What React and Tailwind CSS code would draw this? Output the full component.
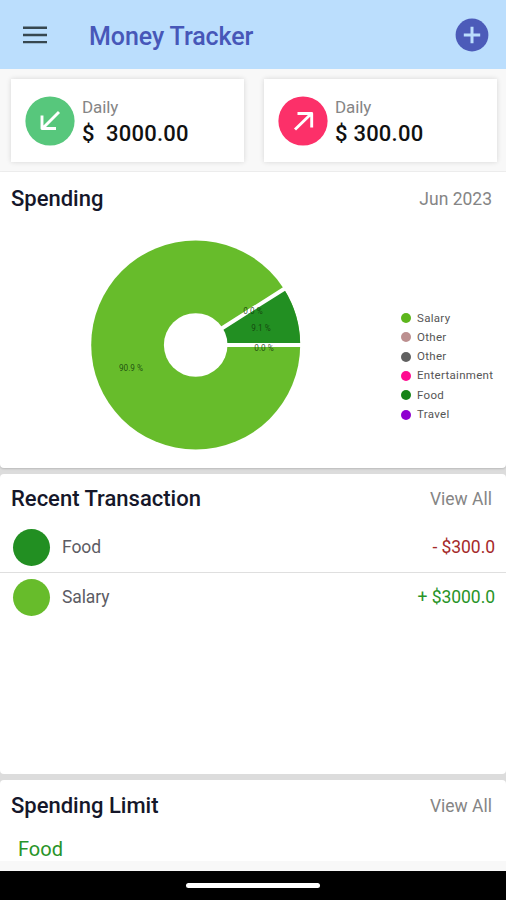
const legend = [
  { name: 'Salary', dot: 'bg-[#5db61c]' },
  { name: 'Other', dot: 'bg-[#bc8f8f]' },
  { name: 'Other', dot: 'bg-[#606060]' },
  { name: 'Entertainment', dot: 'bg-[#ff0a90]' },
  { name: 'Food', dot: 'bg-[#178417]' },
  { name: 'Travel', dot: 'bg-[#8f00d0]' },
];

function Header() {
  return (
    <header className="flex h-[69px] shrink-0 items-center bg-[#bbdefd] pr-[17px] pl-[23px]">
      <svg width="24" height="18" viewBox="0 0 24 18" stroke="#37474f" strokeWidth="2.4">
        <path d="M0 1.7h24M0 9h24M0 16.1h24" />
      </svg>
      <h1 className="ml-[42px] pt-[4px] text-[25px] leading-8 font-medium tracking-[-0.08px] text-[#4757b8]">Money Tracker</h1>
      <svg className="ml-auto" width="34" height="34" viewBox="0 0 34 34">
        <circle cx="17" cy="17" r="16.4" fill="#4c5bb9" />
        <path d="M17 8.8v16.4M8.8 17h16.4" stroke="#bbdefd" strokeWidth="3" />
      </svg>
    </header>
  );
}

function SummaryCard({ color, arrow, amount }) {
  return (
    <div className="flex h-[83px] w-[233px] items-center bg-white pl-[14px] shadow-[0_0_5px_rgba(0,0,0,0.14)]">
      <svg width="50" height="50" viewBox="0 0 50 50" className="shrink-0">
        <circle cx="25" cy="25" r="24.6" fill={color} />
        <path d={arrow} fill="none" stroke="white" strokeWidth="2.9" strokeLinejoin="round" />
      </svg>
      <div className="ml-[7px] pt-[2px]">
        <div className="text-[17px] leading-[24px] tracking-[-0.1px] text-[#858585]">Daily</div>
        <div className="text-[22px] leading-[29px] font-medium tracking-[0.22px] whitespace-pre text-[#111]">{amount}</div>
      </div>
    </div>
  );
}

function SectionTitle({ title, action }) {
  return (
    <div className="flex h-[50px] items-center justify-between pr-[14px] pl-[11px]">
      <h2 className="text-[22px] leading-[28px] font-medium tracking-[0px] text-[#15172a]">{title}</h2>
      <span className="text-[17.5px] tracking-[0px] text-[#858585]">{action}</span>
    </div>
  );
}

function Donut() {
  return (
    <svg width="210" height="210" viewBox="0 0 210 210" className="shrink-0 font-[Roboto,sans-serif]">
      <circle cx="104.7" cy="105" r="104.5" fill="#67bc2b" />
      <path d="M104.7 105L192.9 49A104.5 104.5 0 0 1 209.2 105Z" fill="#228f22" />
      <path d="M194.2 48.2L104.7 105H210" fill="none" stroke="white" strokeWidth="4" />
      <circle cx="104.7" cy="105" r="31.8" fill="white" />
      <g fontSize="8.2" fill="#123c0c" fillOpacity="0.85" textAnchor="middle">
        <text x="162" y="73.5">0.0 %</text>
        <text x="170" y="91">9.1 %</text>
        <text x="173" y="110.5">0.0 %</text>
        <text x="40" y="131">90.9 %</text>
      </g>
    </svg>
  );
}

function Transaction({ dot, name, amount, color }) {
  return (
    <div className="flex h-[50px] items-center pr-[11px] pl-[13px]">
      <span className={`size-[37px] rounded-full ${dot}`} />
      <span className="ml-[12px] pt-[1px] text-[17.5px] tracking-[-0.1px] text-[#5c5c64]">{name}</span>
      <span className={`ml-auto text-[17.5px] tracking-[-0.05px] ${color}`}>{amount}</span>
    </div>
  );
}

export default function App() {
  return (
    <div className="flex h-[900px] w-[506px] flex-col overflow-hidden bg-[#dcdcdc] font-[Roboto,sans-serif]">
      <Header />
      <div className="flex h-[103px] shrink-0 gap-[20px] border-b border-[#eeeeee] bg-[#f8f8f8] pt-[10px] pl-[11px]">
        <SummaryCard color="#57c77c" arrow="M34 16L17.5 32.5M17 19.5V32.5H31" amount="$  3000.00" />
        <SummaryCard color="#fc3069" arrow="M17 33.5L33.5 17.5M19.5 17.5H33.7V31.5" amount="$ 300.00" />
      </div>

      <section className="flex h-[296px] shrink-0 flex-col rounded-b-[4px] bg-white pt-[2px] shadow-[0_1px_2px_rgba(0,0,0,0.15)]">
        <SectionTitle title="Spending" action="Jun 2023" />
        <div className="flex pt-[15.5px] pl-[91px]">
          <Donut />
          <ul className="mt-[69px] ml-[100px]">
            {legend.map((item, i) => (
              <li key={i} className="flex h-[19.3px] items-center gap-[6px] text-[11.5px] tracking-[0.3px] text-[#555]">
                <span className={`size-[10px] rounded-full ${item.dot}`} />
                {item.name}
              </li>
            ))}
          </ul>
        </div>
      </section>

      <section className="mt-[6px] h-[300px] shrink-0 rounded-[4px] bg-white">
        <SectionTitle title="Recent Transaction" action="View All" />
        <div className="-mt-[2px] border-b border-[#dfdfdf]">
          <Transaction dot="bg-[#228f22]" name="Food" amount="- $300.0" color="text-[#a52a2a]" />
        </div>
        <div className="-mt-[1px]">
          <Transaction dot="bg-[#67bc2b]" name="Salary" amount="+ $3000.0" color="text-[#289428]" />
        </div>
      </section>

      <section className="mt-[6px] h-[91px] shrink-0 rounded-t-[4px] border-b-[10px] border-[#f8f8f8] bg-white pt-[1px]">
        <SectionTitle title="Spending Limit" action="View All" />
        <div className="pl-[18px] text-[20px] leading-[37px] tracking-[0px] text-[#289428]">Food</div>
      </section>

      <footer className="flex flex-1 justify-center bg-black pt-[12px]">
        <div className="h-[5px] w-[134px] rounded-full bg-white" />
      </footer>
    </div>
  );
}
